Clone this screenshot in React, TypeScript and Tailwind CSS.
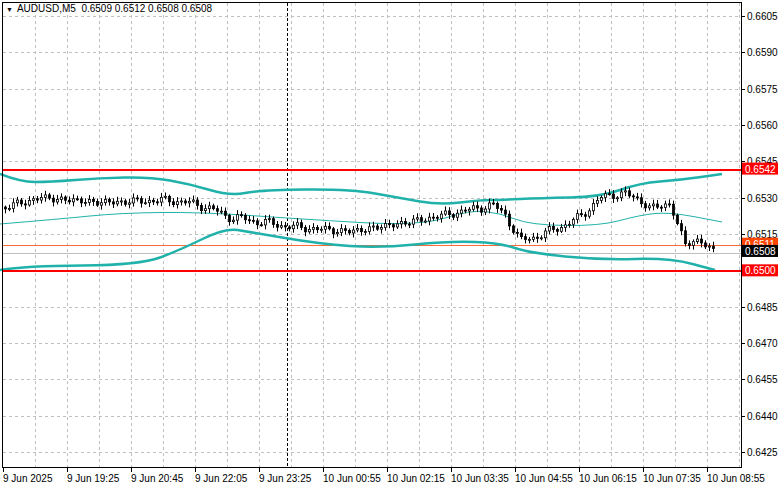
import React from "react";

const PX = 24222;
const py = (p: number) => 16 + (0.6605 - p) * PX;

// anchor points of the close path: [x, price]
const path: [number, number][] = [
  [0, 0.6526], [5, 0.6526], [40, 0.653], [100, 0.6528], [170, 0.6529], [200, 0.6527], [230, 0.6522],
  [290, 0.6518], [350, 0.6516], [410, 0.652], [470, 0.6525], [492, 0.6527], [505, 0.6523],
  [520, 0.6512], [550, 0.6516], [580, 0.6522], [600, 0.653], [625, 0.6532], [650, 0.6526],
  [670, 0.6527], [685, 0.6511], [700, 0.6512], [715, 0.6508],
];

const interp = (pts: [number, number][], x: number) => {
  for (let i = 0; i < pts.length - 1; i++) {
    const [x0, y0] = pts[i];
    const [x1, y1] = pts[i + 1];
    if (x >= x0 && x <= x1) return y0 + ((y1 - y0) * (x - x0)) / (x1 - x0);
  }
  return pts[pts.length - 1][1];
};

const upper: [number, number][] = [
  [0, 174], [20, 182], [50, 182], [100, 178], [150, 177], [190, 184], [230, 196], [260, 190],
  [350, 189], [400, 198], [440, 205], [480, 200], [500, 200], [540, 198], [600, 197], [640, 183],
  [680, 180], [722, 174],
];
const lower: [number, number][] = [
  [0, 270], [25, 266], [140, 265], [180, 250], [225, 228], [250, 232], [320, 244], [380, 248],
  [450, 241], [500, 243], [530, 253], [600, 260], [670, 258], [715, 270],
];
const middle: [number, number][] = [
  [0, 224], [60, 219], [120, 213], [200, 212], [300, 219], [420, 226], [470, 210], [500, 213],
  [530, 225], [600, 226], [640, 215], [670, 212], [722, 222],
];

// smooth curve through midpoints
const curve = (pts: [number, number][]) => {
  let d = `M${pts[0][0]} ${pts[0][1]}`;
  for (let i = 1; i < pts.length - 1; i++) {
    const mx = (pts[i][0] + pts[i + 1][0]) / 2;
    const my = (pts[i][1] + pts[i + 1][1]) / 2;
    d += ` Q${pts[i][0]} ${pts[i][1]} ${mx} ${my}`;
  }
  const l = pts[pts.length - 1];
  return d + ` L${l[0]} ${l[1]}`;
};

const noise = (i: number) => Math.sin(i * 1.7) * 2.5 + Math.cos(i * 0.9) * 1.5 + Math.sin(i * 5.3) * 1.5;

const candles = Array.from({ length: 178 }, (_, i) => {
  const x = 5 + i * 4;
  const c = py(interp(path, x)) + noise(i);
  const o = py(interp(path, x - 4)) + noise(i - 1);
  const hi = Math.min(o, c) - 1.5 - Math.abs(Math.sin(i * 2.3)) * 3;
  const lo = Math.max(o, c) + 1.5 + Math.abs(Math.cos(i * 1.3)) * 3;
  return { x, o, c, hi, lo };
});

const prices = Array.from({ length: 13 }, (_, i) => 0.6605 - i * 0.0015);
const times = ["9 Jun 2025", "9 Jun 19:25", "9 Jun 20:45", "9 Jun 22:05", "9 Jun 23:25", "10 Jun 00:55", "10 Jun 02:15", "10 Jun 03:35", "10 Jun 04:55", "10 Jun 06:15", "10 Jun 07:35", "10 Jun 08:55"];

const tags: [number, string, string][] = [
  [0.6542, "0.6542", "#ff0000"],
  [0.6511, "0.6511", "#ff4500"],
  [0.6508, "0.6508", "#000000"],
  [0.65, "0.6500", "#ff0000"],
];

export default function App() {
  return (
    <div className="relative w-[781px] h-[489px] bg-white overflow-hidden" style={{ fontFamily: "'Liberation Sans', Arial, sans-serif" }}>
      <svg width="781" height="489" className="block" fontSize="10" fontFamily="'Liberation Sans', Arial, sans-serif">
        {/* grid */}
        {Array.from({ length: 23 }, (_, k) => (
          <line key={"v" + k} x1={35.5 + k * 32} x2={35.5 + k * 32} y1={3} y2={467} stroke="#c0c0c0" strokeDasharray="3 3" />
        ))}
        {prices.map((p) => (
          <line key={p} x1={3} x2={741} y1={Math.round(py(p)) + 0.5} y2={Math.round(py(p)) + 0.5} stroke="#c0c0c0" strokeDasharray="3 3" />
        ))}
        <line x1={287.5} x2={287.5} y1={3} y2={467} stroke="#000" strokeDasharray="3 2" />
        {/* price lines */}
        <line x1={3} x2={741} y1={245.5} y2={245.5} stroke="#ff4500" strokeWidth="0.8" />
        <line x1={3} x2={741} y1={253.5} y2={253.5} stroke="#c0c0c0" />
        {/* bands */}
        <path d={curve(upper)} fill="none" stroke="#20b2aa" strokeWidth="2.5" />
        <path d={curve(lower)} fill="none" stroke="#20b2aa" strokeWidth="2.5" />
        <path d={curve(middle)} fill="none" stroke="#20b2aa" strokeWidth="1" />
        {/* candles */}
        {candles.map((k, i) => (
          <g key={i}>
            <line x1={k.x + 0.5} x2={k.x + 0.5} y1={k.hi} y2={k.lo} stroke="#000" />
            <rect x={k.x - 0.5} y={Math.min(k.o, k.c)} width={2} height={Math.max(1, Math.abs(k.o - k.c))} fill={k.c < k.o ? "#fff" : "#000"} stroke="#000" strokeWidth="0.8" />
          </g>
        ))}
        {/* support/resistance */}
        <line x1={3} x2={741} y1={170} y2={170} stroke="#ff0000" strokeWidth="2" />
        <line x1={3} x2={741} y1={271} y2={271} stroke="#ff0000" strokeWidth="2" />
        {/* frame */}
        <rect x={2.5} y={2.5} width={739} height={465} fill="none" stroke="#000" />
        {/* price axis */}
        {prices.map((p) => (
          <g key={"l" + p}>
            <line x1={741} x2={745} y1={Math.round(py(p)) + 0.5} y2={Math.round(py(p)) + 0.5} stroke="#000" />
            <text x={747} y={py(p) + 4} fill="#000">{p.toFixed(4)}</text>
          </g>
        ))}
        {tags.map(([p, t, c]) => (
          <g key={t}>
            <rect x={742} y={py(p) - 6} width={36} height={12} fill={c} />
            <text x={745} y={py(p) + 4} fill="#fff">{t}</text>
          </g>
        ))}
        {/* time axis */}
        {times.map((t, i) => (
          <g key={t}>
            <line x1={3.5 + i * 64} x2={3.5 + i * 64} y1={467} y2={472} stroke="#000" />
            <text x={3 + i * 64} y={482} fill="#000">{t}</text>
          </g>
        ))}
      </svg>
      <div className="absolute left-[6px] top-[4px] flex items-center gap-[4px] text-[10px] leading-none text-black">
        <span className="text-[7px]">▼</span>
        <span>AUDUSD,M5&nbsp; 0.6509 0.6512 0.6508 0.6508</span>
      </div>
    </div>
  );
}
